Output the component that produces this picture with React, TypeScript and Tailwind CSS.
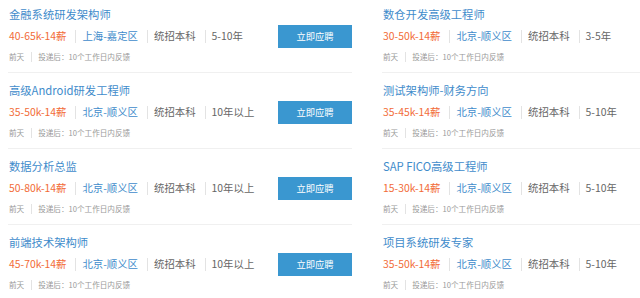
const left = [
  { title: "金融系统研发架构师", salary: "40-65k-14薪", city: "上海-嘉定区", exp: "5-10年" },
  { title: "高级Android研发工程师", salary: "35-50k-14薪", city: "北京-顺义区", exp: "10年以上" },
  { title: "数据分析总监", salary: "50-80k-14薪", city: "北京-顺义区", exp: "10年以上" },
  { title: "前端技术架构师", salary: "45-70k-14薪", city: "北京-顺义区", exp: "10年以上" },
];

const right = [
  { title: "数仓开发高级工程师", salary: "30-50k-14薪", city: "北京-顺义区", exp: "3-5年" },
  { title: "测试架构师-财务方向", salary: "35-45k-14薪", city: "北京-顺义区", exp: "5-10年" },
  { title: "SAP FICO高级工程师", salary: "15-30k-14薪", city: "北京-顺义区", exp: "5-10年" },
  { title: "项目系统研发专家", salary: "35-50k-14薪", city: "北京-顺义区", exp: "5-10年" },
];

type Job = { title: string; salary: string; city: string; exp: string };

function Sep() {
  return <span className="ml-[9px] mr-[6px] h-[13px] w-px bg-[#e3e3e3]" />;
}

function JobRow({ job }: { job: Job }) {
  return (
    <div className="flex h-[76px] justify-between border-b border-[#f0f0f0] pt-[9px] pl-px">
      <div className="flex flex-col">
        <p className="text-[11.3px] leading-[16px] text-[#3f8ccb]">{job.title}</p>
        <div className="mt-[6px] flex h-[16px] items-center text-[10.4px] leading-[16px] text-[#666]">
          <span className="text-[#f26b38]">{job.salary}</span>
          <Sep />
          <span className="text-[#3f8ccb]">{job.city}</span>
          <Sep />
          <span>统招本科</span>
          <Sep />
          <span>{job.exp}</span>
        </div>
        <div className="mt-[7px] flex h-[12px] items-center text-[7.6px] leading-[12px] text-[#999]">
          <span>前天</span>
          <span className="ml-[7px] mr-[6px] h-[10px] w-px bg-[#e3e3e3]" />
          <span>投递后：10个工作日内反馈</span>
        </div>
      </div>
      <button className="mt-[19px] h-[23px] w-[74px] bg-[#3a97d0] text-[9.3px] text-white">
        立即应聘
      </button>
    </div>
  );
}

export default function App() {
  return (
    <div
      className="flex h-[298px] w-[640px] gap-[30px] overflow-hidden bg-white px-[8px]"
      style={{ fontFamily: '"Noto Sans CJK SC", "Liberation Sans", sans-serif' }}
    >
      <div className="-mt-[3px] w-[344px] shrink-0">
        {left.map((j) => (
          <JobRow key={j.title} job={j} />
        ))}
      </div>
      <div className="-mt-[3px] w-[344px] shrink-0">
        {right.map((j) => (
          <JobRow key={j.title} job={j} />
        ))}
      </div>
    </div>
  );
}
